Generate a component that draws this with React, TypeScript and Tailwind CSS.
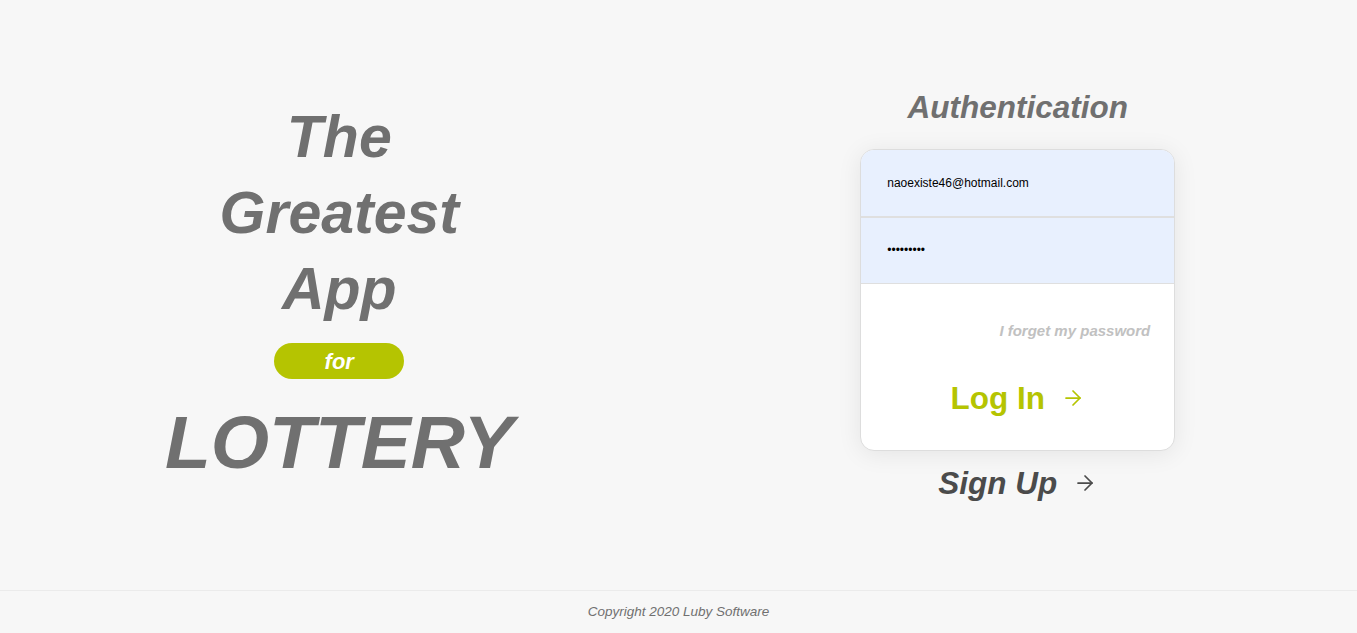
import { ArrowRight } from "lucide-react";

const font = { fontFamily: '"Liberation Sans", Arial, sans-serif' };

const Hero = () => {
  return (
    <div className="flex flex-col items-center pb-[6px] text-[#707070] italic font-bold">
      <p className="text-[59px] leading-[76px]">The</p>
      <p className="text-[59px] leading-[76px]">Greatest</p>
      <p className="text-[59px] leading-[76px]">App</p>
      <span className="mt-4 flex h-9 w-[130px] items-center justify-center rounded-full bg-[#b5c401] text-[22px] text-white">
        for
      </span>
      <p className="mt-[20px] text-[75px] leading-[86px]">LOTTERY</p>
    </div>
  );
};

const AuthForm = () => {
  return (
    <div className="flex flex-col items-center">
      <h2 className="text-[31.5px] leading-[37px] font-bold italic text-[#707070]">
        Authentication
      </h2>
      <div className="mt-[23px] w-[315px] overflow-hidden rounded-[14px] border border-[#dddddd] bg-white shadow-[0_3px_25px_rgba(0,0,0,0.08)]">
        <input
          type="email"
          readOnly
          defaultValue="naoexiste46@hotmail.com"
          className="block h-[68px] w-full border-b-2 border-[#dfdfdf] bg-[#e8f0fe] px-[26px] text-[12px] text-black outline-none"
          style={font}
        />
        <input
          type="password"
          readOnly
          defaultValue="123456789"
          className="block h-[66px] w-full border-b border-[#dfdfdf] bg-[#e8f0fe] px-[26px] text-[12px] text-black outline-none"
          style={font}
        />
        <div className="flex flex-col px-6 pt-[38px] pb-[33px]">
          <p className="text-right text-[15px] leading-[17px] font-bold italic text-[#c1c1c1]">
            I forget my password
          </p>
          <button className="mt-[41px] flex items-center justify-center gap-4 text-[31.5px] leading-[37px] font-bold text-[#b5c401]">
            Log In
            <ArrowRight size={24} strokeWidth={1.75} />
          </button>
        </div>
      </div>
      <button className="mt-[14px] flex items-center justify-center gap-4 text-[31.5px] leading-[37px] font-bold italic text-[#4b4b4b]">
        Sign Up
        <ArrowRight size={24} strokeWidth={1.75} />
      </button>
    </div>
  );
};

export default function App() {
  return (
    <div className="flex h-[633px] flex-col bg-[#f7f7f7]" style={font}>
      <main className="grid flex-1 grid-cols-2 items-center">
        <Hero />
        <AuthForm />
      </main>
      <footer className="flex h-[43px] items-center justify-center border-t border-[#ebebeb]">
        <p className="text-[13.5px] italic text-[#707070]">Copyright 2020 Luby Software</p>
      </footer>
    </div>
  );
}
